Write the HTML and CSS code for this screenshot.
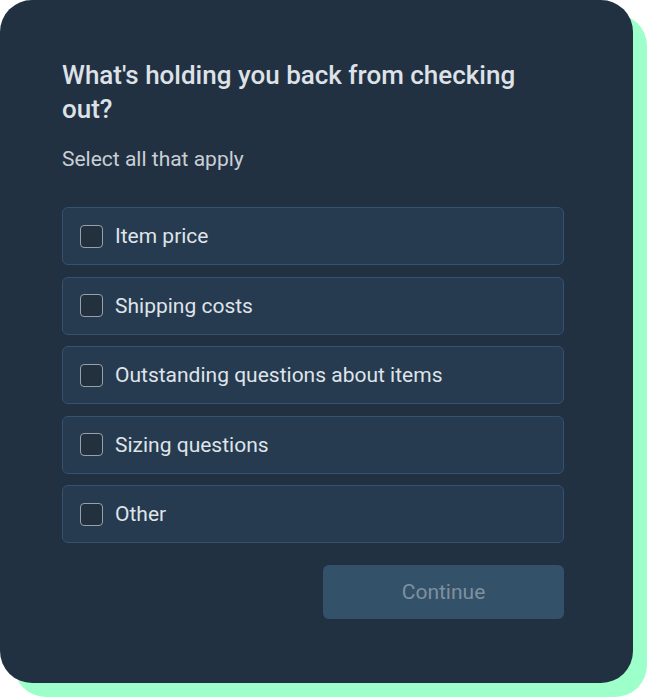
FILE: index.html
```html
<!DOCTYPE html>
<html lang="en">
<head>
    <meta charset="UTF-8">
    <meta name="viewport" content="width=device-width, initial-scale=1.0">
    <title>Checkout survey</title>
    <link rel="stylesheet" href="styles.css">
</head>
<body>
    <section class="survey-card">
        <h1 class="survey-title">What's holding you back from checking out?</h1>
        <p class="survey-hint">Select all that apply</p>

        <div class="option-list">
            <label class="option">
                <input type="checkbox" class="option-box">
                <span>Item price</span>
            </label>
            <label class="option">
                <input type="checkbox" class="option-box">
                <span>Shipping costs</span>
            </label>
            <label class="option">
                <input type="checkbox" class="option-box">
                <span>Outstanding questions about items</span>
            </label>
            <label class="option">
                <input type="checkbox" class="option-box">
                <span>Sizing questions</span>
            </label>
            <label class="option">
                <input type="checkbox" class="option-box">
                <span>Other</span>
            </label>
        </div>

        <div class="actions">
            <button class="continue-btn" disabled>Continue</button>
        </div>
    </section>
</body>
</html>
```

FILE: styles.css
```css
* {
    margin: 0;
    padding: 0;
    box-sizing: border-box;
    font-family: Roboto, 'Liberation Sans', sans-serif;
}

body {
    background-color: #ffffff;
    width: 647px;
    height: 697px;
}

/* Card */
.survey-card {
    width: 633px;
    height: 683px;
    background-color: #223142;
    border-radius: 32px;
    box-shadow: 14px 14px 0 #9dffca;
    padding: 58px 69px 0 62px;
    color: #e1e5ea;
}

.survey-title {
    font-size: 26px;
    font-weight: 500;
    line-height: 34px;
    color: #dde2e8;
}

.survey-hint {
    margin-top: 20px;
    font-size: 21px;
    line-height: 26px;
    color: #c9cfd6;
}

/* Options */
.option-list {
    margin-top: 35px;
    display: flex;
    flex-direction: column;
    gap: 11.5px;
}

.option {
    height: 58px;
    display: flex;
    align-items: center;
    gap: 12px;
    padding: 0 17px;
    background-color: #263a50;
    border: 1px solid #35526e;
    border-radius: 6px;
    font-size: 21px;
    color: #dfe4e9;
    cursor: pointer;
}

.option-box {
    appearance: none;
    width: 23px;
    height: 23px;
    border: 1.5px solid #97a1ac;
    border-radius: 4px;
    background-color: #23313f;
    flex-shrink: 0;
}

/* Actions */
.actions {
    margin-top: 22px;
    display: flex;
    justify-content: flex-end;
}

.continue-btn {
    width: 241px;
    height: 54px;
    border: none;
    border-radius: 6px;
    background-color: #33526a;
    color: #7f909e;
    font-size: 21px;
}
```
